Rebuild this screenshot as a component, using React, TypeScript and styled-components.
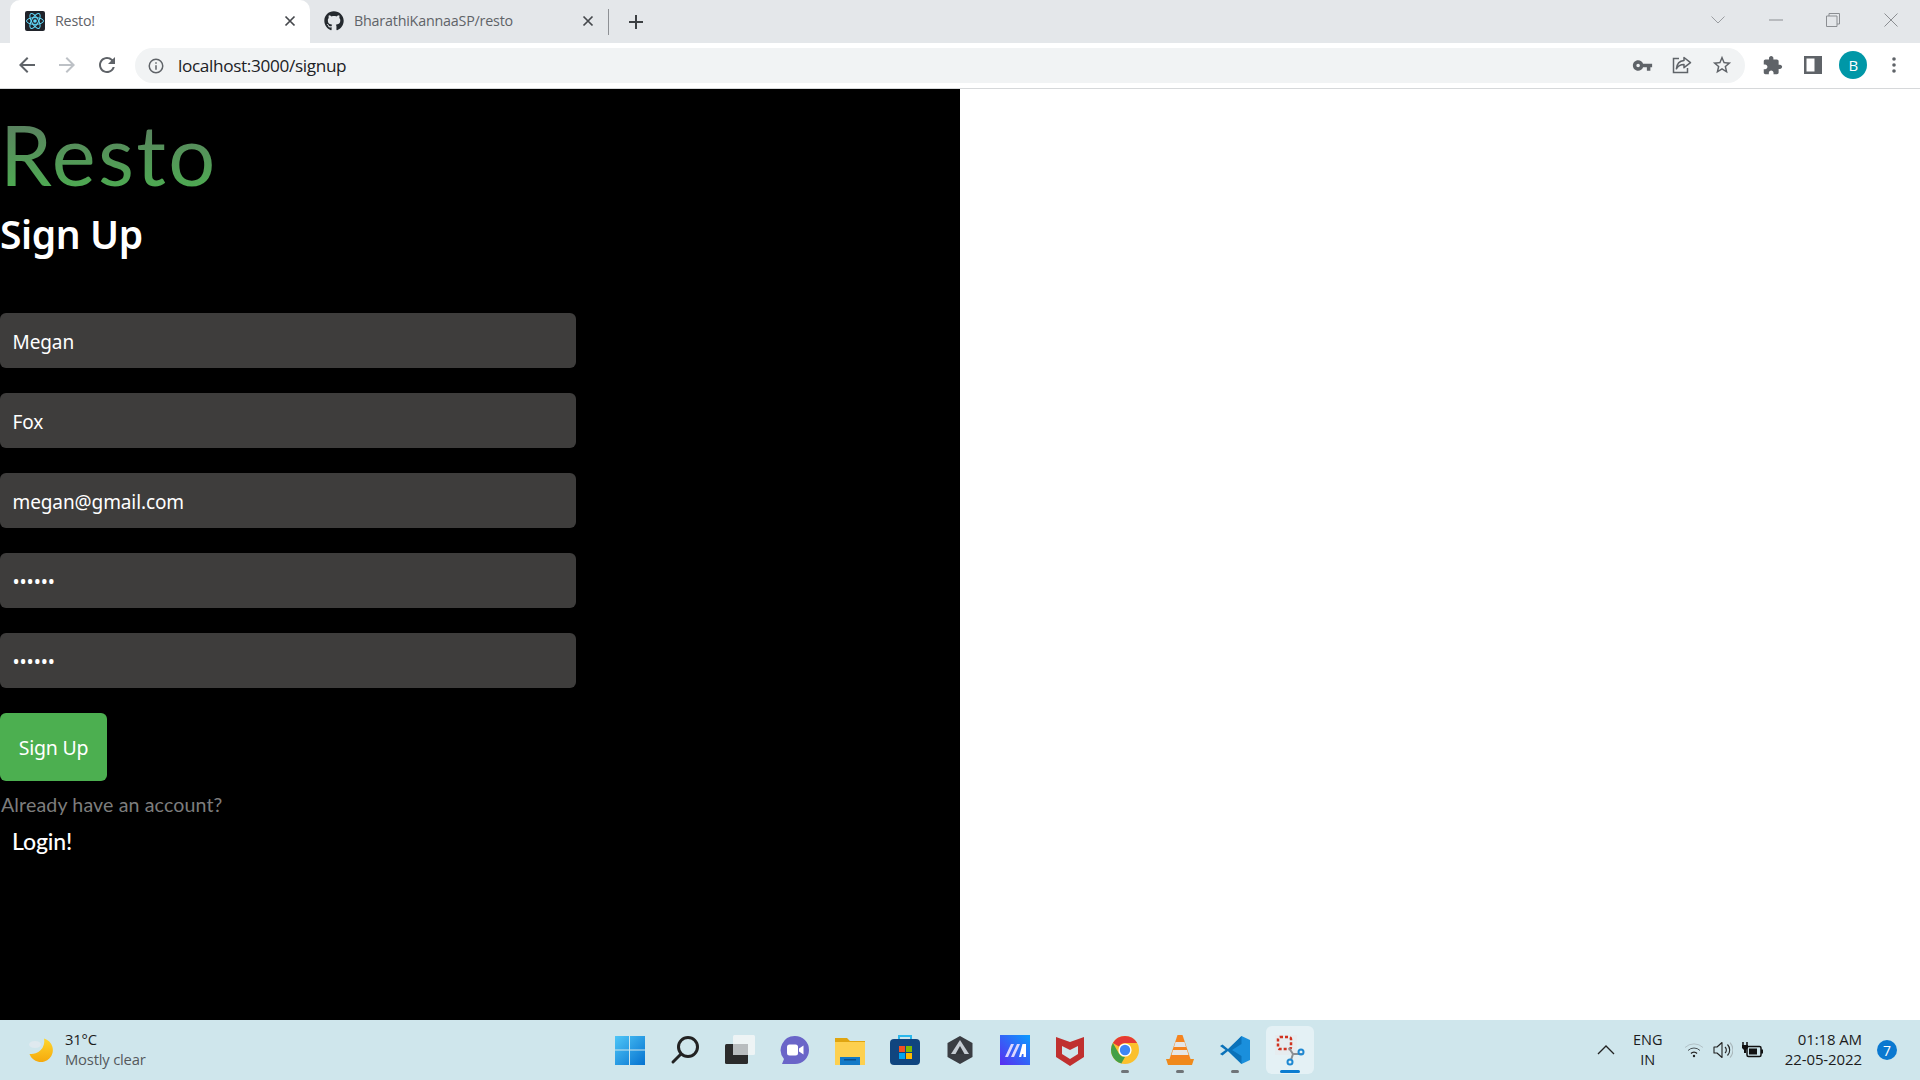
import React from "react";
import styled, { createGlobalStyle } from "styled-components";
import { FaGithub } from "react-icons/fa";

const Global = createGlobalStyle`
  html, body { margin: 0; padding: 0; background: #fff; }
  body { font-family: "Noto Sans", "Open Sans", sans-serif; overflow: hidden; }
  * { box-sizing: border-box; }
`;

const Screen = styled.div`
  width: 1920px; height: 1080px; display: flex; flex-direction: column; background: #fff;
`;

/* ---------- browser chrome ---------- */
const TabStrip = styled.div`
  height: 43px; flex: none; background: #e4e7ea; display: flex; align-items: flex-end; padding-left: 10px;
`;
const Tab = styled.div<{ $active?: boolean }>`
  width: ${(p) => (p.$active ? 300 : 298)}px; height: 43px; display: flex; align-items: center; gap: 10px;
  padding: 0 14px 2px ${(p) => (p.$active ? 15 : 14)}px; flex: none;
  background: ${(p) => (p.$active ? "#fff" : "transparent")};
  border-radius: 10px 10px 0 0;
  color: #5f6368; font-size: 14.3px; font-family: "Open Sans", sans-serif; letter-spacing: -0.2px;
`;
const TabTitle = styled.span`flex: 1; white-space: nowrap;`;
const TabDivider = styled.div`width: 1px; height: 26px; background: #8d9094; margin: 0 0 8px 0; flex: none;`;
const NewTab = styled.div`width: 53px; height: 43px; display: flex; align-items: center; justify-content: center; flex: none;`;
const WindowControls = styled.div`
  margin-left: auto; height: 43px; display: flex; align-items: center; padding-bottom: 3px;
`;
const WinBtn = styled.div<{ $w: number }>`
  width: ${(p) => p.$w}px; height: 36px; display: flex; align-items: center; justify-content: center;
`;

const Toolbar = styled.div`
  height: 46px; flex: none; background: #fff; border-bottom: 1px solid #d6d8da;
  display: flex; align-items: center; padding: 0 0 1px 7px;
`;
const NavBtn = styled.div`width: 40px; height: 40px; display: flex; align-items: center; justify-content: center; flex: none;`;
const UrlBar = styled.div`
  width: 1610px; height: 35px; margin-left: 8px; border-radius: 18px; background: #f1f3f4; flex: none;
  display: flex; align-items: center; padding: 0 0 0 34px; position: relative;
`;
const InfoSlot = styled.div`position: absolute; left: 12px; top: 9px; width: 18px; height: 18px;`;
const UrlText = styled.span`
  margin-left: 9px; font-family: "Open Sans", sans-serif; font-size: 17.2px; color: #202124; letter-spacing: -0.35px; white-space: nowrap;
`;
const UrlActions = styled.div`margin-left: auto; display: flex; align-items: center; padding-right: 3px;`;
const UrlAction = styled.div`width: 40px; height: 35px; display: flex; align-items: center; justify-content: center;`;
const ToolActions = styled.div`display: flex; align-items: center; padding-left: 7px;`;
const ToolAction = styled.div`width: 40.5px; height: 40px; display: flex; align-items: center; justify-content: center;`;
const Avatar = styled.div`
  width: 28px; height: 28px; border-radius: 50%; background: #0097a7; color: #fff;
  font-size: 15px; display: flex; align-items: center; justify-content: center; font-family: "Open Sans", sans-serif;
`;

/* ---------- page ---------- */
const Content = styled.div`flex: 1; display: flex; min-height: 0;`;
const Dark = styled.main`width: 960px; background: #000; display: flex; flex-direction: column; align-items: flex-start;`;
const Blank = styled.div`flex: 1; background: #fff;`;
const Brand = styled.h1`
  margin: 23px 0 0 0; height: 84px; font-family: "Lato", sans-serif; font-weight: 400; font-size: 83px; line-height: 84px;
  letter-spacing: 2.4px; background: linear-gradient(#5c7a62, #4caf50); -webkit-background-clip: text; background-clip: text; color: transparent;
`;
const Heading = styled.h2`
  margin: 12px 0 0 0; height: 56px; font-family: "Noto Sans", sans-serif; font-weight: 600; font-size: 39px; line-height: 52px; color: #fff; letter-spacing: -0.4px;
`;
const Form = styled.form`margin-top: 49px; display: flex; flex-direction: column; align-items: flex-start; gap: 25px;`;
const Field = styled.input`
  width: 576px; height: 55px; border: 0; outline: 0; border-radius: 6px; background: #3e3d3c; color: #fff;
  padding: 2px 12.5px 0; font-family: "Noto Sans", sans-serif; font-size: 19px; letter-spacing: -0.1px; display: block;
`;
const Submit = styled.button`
  width: 107px; height: 68px; border: 0; border-radius: 6px; background: #4caf50; color: #fff; padding: 0;
  font-family: "Noto Sans", sans-serif; font-size: 19.5px; letter-spacing: -0.2px;
`;
const Hint = styled.p`
  margin: 11px 0 0 1px; font-family: "Lato", sans-serif; font-size: 19.6px; line-height: 26px; color: #7d7d7d; letter-spacing: 0.13px;
`;
const LoginLink = styled.a`
  margin: 8px 0 0 12px; font-family: "Lato", sans-serif; font-size: 23px; line-height: 30px; color: #fff; font-weight: 500; letter-spacing: -0.1px;
`;

/* ---------- taskbar ---------- */
const Taskbar = styled.footer`
  height: 60px; flex: none; background: #cfe6ec; display: grid; grid-template-columns: 1fr auto 1fr; align-items: center;
`;
const Weather = styled.div`display: flex; align-items: center; padding-left: 27px; gap: 10px;`;
const WeatherText = styled.div`
  font-family: "Open Sans", sans-serif; font-size: 14.8px; line-height: 20px; color: #1c1c1c; letter-spacing: -0.2px; margin-top: -2px;
`;
const WeatherSub = styled.div`color: #55595c;`;
const Dock = styled.div`display: flex; align-items: center;`;
const DockSlot = styled.div<{ $active?: boolean }>`
  width: ${(p) => (p.$active ? 48 : 55)}px; margin: 0 ${(p) => (p.$active ? 3.5 : 0)}px; height: 48px;
  display: flex; align-items: center; justify-content: center; position: relative; border-radius: 6px;
  background: ${(p) => (p.$active ? "#e4f1f5" : "transparent")};
`;
const RunDot = styled.span<{ $active?: boolean }>`
  position: absolute; bottom: 1px; left: 50%; transform: translateX(-50%);
  height: 3px; border-radius: 2px; width: ${(p) => (p.$active ? 20 : 8)}px;
  background: ${(p) => (p.$active ? "#0a7cd1" : "#6f7478")};
`;
const Tray = styled.div`display: flex; align-items: center; justify-content: flex-end; padding-right: 23px;`;
const TrayIcon = styled.div<{ $w: number }>`width: ${(p) => p.$w}px; display: flex; align-items: center; justify-content: center;`;
const Lang = styled.div`
  width: 50px; margin: -1px 7px 0 7px; text-align: center; font-family: "Open Sans", sans-serif; font-size: 14.5px; line-height: 20px; color: #1c1c1c;
`;
const Clock = styled.div`
  margin: -2px 0 0 17px; text-align: right; font-family: "Open Sans", sans-serif; font-size: 15px; line-height: 20px; color: #1c1c1c; white-space: nowrap; letter-spacing: -0.1px;
`;
const Badge = styled.div`
  width: 20px; height: 20px; border-radius: 50%; background: #0a78d0; color: #fff; margin-left: 15px;
  font-family: "Open Sans", sans-serif; font-size: 14px; display: flex; align-items: center; justify-content: center;
`;

/* ---------- icons ---------- */
const Close = () => (
  <svg width="12" height="12" viewBox="0 0 12 12"><path d="M1.5 1.5l9 9M10.5 1.5l-9 9" stroke="#45484c" strokeWidth="1.7" /></svg>
);
const ReactIcon = () => (
  <svg width="20" height="20" viewBox="0 0 20 20">
    <rect width="20" height="20" rx="2" fill="#20232a" />
    <g fill="none" stroke="#61dafb" strokeWidth="1">
      <ellipse cx="10" cy="10" rx="8.5" ry="3.4" />
      <ellipse cx="10" cy="10" rx="8.5" ry="3.4" transform="rotate(60 10 10)" />
      <ellipse cx="10" cy="10" rx="8.5" ry="3.4" transform="rotate(120 10 10)" />
    </g>
    <circle cx="10" cy="10" r="1.8" fill="#61dafb" />
  </svg>
);
const Md = ({ d, size = 20, fill = "#5f6368" }: { d: string; size?: number; fill?: string }) => (
  <svg width={size} height={size} viewBox="0 0 24 24"><path d={d} fill={fill} /></svg>
);
const ChromeLogo = () => (
  <svg width="30" height="30" viewBox="0 0 30 30">
    <circle cx="15" cy="15" r="14" fill="#fbc02d" />
    <path d="M15 1a14 14 0 0 1 12.1 7H15a7 7 0 0 0-6.1 3.5L2.9 8A14 14 0 0 1 15 1z" fill="#e53935" />
    <path d="M2.9 8l6 10.5A7 7 0 0 0 15 22l-3.7 6.5 .4.1A14 14 0 0 1 2.9 8z" fill="#43a047" />
    <circle cx="15" cy="15" r="6.6" fill="#fff" />
    <circle cx="15" cy="15" r="5.2" fill="#3f86f4" />
  </svg>
);

export default function App() {
  return (
    <Screen>
      <Global />
      <TabStrip>
        <Tab $active>
          <ReactIcon />
          <TabTitle>Resto!</TabTitle>
          <Close />
        </Tab>
        <Tab>
          <FaGithub size={20} color="#24292e" />
          <TabTitle>BharathiKannaaSP/resto</TabTitle>
          <Close />
        </Tab>
        <TabDivider />
        <NewTab>
          <svg width="16" height="16" viewBox="0 0 16 16"><path d="M8 1v14M1 8h14" stroke="#3c4043" strokeWidth="2" /></svg>
        </NewTab>
        <WindowControls>
          <WinBtn $w={58}><svg width="14" height="8" viewBox="0 0 14 8"><path d="M.5.5L7 7l6.5-6.5" fill="none" stroke="#9a9da1" /></svg></WinBtn>
          <WinBtn $w={57}><svg width="14" height="2" viewBox="0 0 14 2"><path d="M0 1h14" stroke="#8b8e92" /></svg></WinBtn>
          <WinBtn $w={58}><svg width="14" height="14" viewBox="0 0 14 14"><path d="M.5 3h10.5v10.5H.5zM3 3V.5h10.5V11H11" fill="none" stroke="#8b8e92" /></svg></WinBtn>
          <WinBtn $w={58}><svg width="14" height="14" viewBox="0 0 14 14"><path d="M.5.5l13 13M13.5.5l-13 13" stroke="#8b8e92" /></svg></WinBtn>
        </WindowControls>
      </TabStrip>

      <Toolbar>
        <NavBtn><Md size={24} fill="#5f6368" d="M20 11H7.83l5.59-5.59L12 4l-8 8 8 8 1.41-1.41L7.83 13H20v-2z" /></NavBtn>
        <NavBtn><Md size={24} fill="#bdc1c6" d="M12 4l-1.41 1.41L16.17 11H4v2h12.17l-5.58 5.59L12 20l8-8z" /></NavBtn>
        <NavBtn><Md size={24} fill="#5f6368" d="M17.65 6.35A7.958 7.958 0 0 0 12 4c-4.42 0-7.99 3.58-7.99 8s3.57 8 7.99 8c3.73 0 6.84-2.55 7.73-6h-2.08A5.99 5.99 0 0 1 12 18c-3.31 0-6-2.69-6-6s2.69-6 6-6c1.66 0 3.14.69 4.22 1.78L13 11h7V4l-2.35 2.35z" /></NavBtn>
        <UrlBar>
          <InfoSlot><Md size={18} fill="#5f6368" d="M11 7h2v2h-2zm0 4h2v6h-2zm1-9a10 10 0 1 0 0 20 10 10 0 0 0 0-20zm0 18a8 8 0 1 1 0-16 8 8 0 0 1 0 16z" /></InfoSlot>
          <UrlText>localhost:3000/signup</UrlText>
          <UrlActions>
            <UrlAction><Md size={21} d="M12.65 10C11.83 7.67 9.61 6 7 6c-3.31 0-6 2.69-6 6s2.69 6 6 6c2.61 0 4.83-1.67 5.65-4H17v4h4v-4h2v-4H12.65zM7 14c-1.1 0-2-.9-2-2s.9-2 2-2 2 .9 2 2-.9 2-2 2z" /></UrlAction>
            <UrlAction>
              <svg width="20" height="20" viewBox="0 0 20 20" fill="none" stroke="#5f6368" strokeWidth="1.5">
                <path d="M7 3.5H1.5v14h14V13" />
                <path d="M12 2.5l6.5 5.2-6.5 5V9.6c-3.8 0-6 1.2-7.6 4.2.4-4.6 3-8 7.6-8.4z" strokeLinejoin="round" />
              </svg>
            </UrlAction>
            <UrlAction><Md size={22} d="M22 9.24l-7.19-.62L12 2 9.19 8.63 2 9.24l5.46 4.73L5.82 21 12 17.27 18.18 21l-1.63-7.03L22 9.24zM12 15.4l-3.76 2.27 1-4.28-3.32-2.88 4.38-.38L12 6.1l1.71 4.04 4.38.38-3.32 2.88 1 4.28L12 15.4z" /></UrlAction>
          </UrlActions>
        </UrlBar>
        <ToolActions>
          <ToolAction><Md size={21} d="M20.5 11H19V7c0-1.1-.9-2-2-2h-4V3.5C13 2.12 11.88 1 10.5 1S8 2.12 8 3.5V5H4c-1.1 0-1.99.9-1.99 2v3.8H3.5c1.49 0 2.7 1.21 2.7 2.7s-1.21 2.7-2.7 2.7H2V20c0 1.1.9 2 2 2h3.8v-1.5c0-1.49 1.21-2.7 2.7-2.7 1.49 0 2.7 1.21 2.7 2.7V22H17c1.1 0 2-.9 2-2v-4h1.5c1.38 0 2.5-1.12 2.5-2.5S21.88 11 20.5 11z" /></ToolAction>
          <ToolAction>
            <svg width="18" height="18" viewBox="0 0 18 18"><path fillRule="evenodd" d="M0 0h18v18H0zM2.5 2.500v13h8v-13z" fill="#5f6368" /></svg>
          </ToolAction>
          <ToolAction><Avatar>B</Avatar></ToolAction>
          <ToolAction>
            <svg width="4" height="16" viewBox="0 0 4 16" fill="#5f6368"><circle cx="2" cy="2" r="1.8" /><circle cx="2" cy="8" r="1.8" /><circle cx="2" cy="14" r="1.8" /></svg>
          </ToolAction>
        </ToolActions>
      </Toolbar>

      <Content>
        <Dark>
          <Brand>Resto</Brand>
          <Heading>Sign Up</Heading>
          <Form onSubmit={(e) => e.preventDefault()}>
            <Field readOnly value="Megan" />
            <Field readOnly value="Fox" />
            <Field readOnly value="megan@gmail.com" />
            <Field readOnly type="password" value="123456" />
            <Field readOnly type="password" value="123456" />
            <Submit>Sign Up</Submit>
          </Form>
          <Hint>Already have an account?</Hint>
          <LoginLink>Login!</LoginLink>
        </Dark>
        <Blank />
      </Content>

      <Taskbar>
        <Weather>
          <svg width="28" height="28" viewBox="0 0 28 28">
            <defs><linearGradient id="moon" x1="0" y1="0" x2="0" y2="1"><stop offset="0" stopColor="#ffd62e" /><stop offset="1" stopColor="#f5a90c" /></linearGradient></defs>
            <path d="M17 2.500A12 12 0 1 1 2.500 18 13 13 0 0 0 17 2.500z" fill="url(#moon)" />
            <ellipse cx="8" cy="8.500" rx="6" ry="3.500" fill="#dfe9ef" />
          </svg>
          <WeatherText>
            31°C
            <WeatherSub>Mostly clear</WeatherSub>
          </WeatherText>
        </Weather>
        <Dock>
          <DockSlot>
            <svg width="30" height="30" viewBox="0 0 30 30">
              <defs><linearGradient id="w" x1="0" y1="0" x2="1" y2="1"><stop offset="0" stopColor="#4fc6f7" /><stop offset="1" stopColor="#0572d0" /></linearGradient></defs>
              <path fillRule="evenodd" d="M0 1h14v13.500H0zM15 1h15v13.500H15zM0 15.500h14V30H0zM15 15.500h15V30H15z" fill="url(#w)" />
            </svg>
          </DockSlot>
          <DockSlot>
            <svg width="30" height="30" viewBox="0 0 30 30" fill="none" stroke="#222" strokeWidth="3"><circle cx="18" cy="12" r="9.500" /><path d="M11 19l-8 8" strokeLinecap="round" /></svg>
          </DockSlot>
          <DockSlot>
            <svg width="30" height="30" viewBox="0 0 30 30">
              <rect x="0" y="9" width="23" height="20" rx="1.500" fill="#2b2b2b" />
              <rect x="8" y="0" width="22" height="20" rx="1.500" fill="#f3f6f7" opacity=".85" />
              <rect x="8" y="9" width="15" height="11" fill="#b9bdbf" />
            </svg>
          </DockSlot>
          <DockSlot>
            <svg width="30" height="30" viewBox="0 0 30 30">
              <path d="M15 1a14 14 0 0 1 0 28H2l2-5A14 14 0 0 1 15 1z" fill="#6a65c8" />
              <rect x="7" y="9.500" width="11" height="11" rx="2.500" fill="#fff" />
              <path d="M19 13.500l4.500-3v9l-4.500-3z" fill="#fff" />
            </svg>
          </DockSlot>
          <DockSlot>
            <svg width="30" height="30" viewBox="0 0 30 30">
              <path d="M0 3h12l3 3h15v24H0z" fill="#e0a510" />
              <rect x="0" y="7" width="30" height="23" fill="#fdd04f" />
              <path d="M5 22h20v8H5z" fill="#1279c7" />
              <rect x="9" y="24" width="12" height="1.500" fill="#0b4f8a" />
            </svg>
          </DockSlot>
          <DockSlot>
            <svg width="30" height="32" viewBox="0 0 30 32">
              <path d="M9 6V2h12v4" fill="none" stroke="#2bb8ec" strokeWidth="2" />
              <rect x="0" y="5" width="30" height="26" rx="4" fill="#10457f" />
              <rect x="9" y="12" width="6" height="6" fill="#f25022" />
              <rect x="16" y="12" width="6" height="6" fill="#7fba00" />
              <rect x="9" y="19" width="6" height="6" fill="#00a4ef" />
              <rect x="16" y="19" width="6" height="6" fill="#ffb900" />
            </svg>
          </DockSlot>
          <DockSlot>
            <svg width="30" height="30" viewBox="0 0 30 30">
              <path d="M15 1l12.500 7v14L15 29 2.500 22V8z" fill="#3a3d42" />
              <path d="M15 5l9 14H6z" fill="#c6ccd2" />
              <path d="M15 11l4.500 8h-9z" fill="#33363a" />
            </svg>
          </DockSlot>
          <DockSlot>
            <svg width="30" height="30" viewBox="0 0 30 30">
              <defs><linearGradient id="m" x1="0" y1="1" x2="1" y2="0"><stop offset="0" stopColor="#5a2cf0" /><stop offset="1" stopColor="#0a9cff" /></linearGradient></defs>
              <rect width="30" height="30" fill="url(#m)" />
              <path d="M5 22l6-13h3l-6 13zM11 22l6-13h3l-6 13z" fill="#dcd6ff" />
              <path d="M19 22l3.500-13H26v13h-2.500v-3H22l-.8 3z" fill="#fff" />
            </svg>
          </DockSlot>
          <DockSlot>
            <svg width="28" height="32" viewBox="0 0 28 32">
              <path fillRule="evenodd" d="M0 3l14 5 14-5v20l-14 9-14-9zM6 12v8l8 5 8-5v-8l-8 4z" fill="#c0302f" />
            </svg>
          </DockSlot>
          <DockSlot><ChromeLogo /><RunDot /></DockSlot>
          <DockSlot>
            <svg width="28" height="32" viewBox="0 0 28 32">
              <path d="M11.500 1h5l8 24H3.500z" fill="#f5841f" />
              <path d="M9.500 8h9l1.500 5H8zM7 16h14l1.500 5h-17z" fill="#e6e6e6" />
              <path d="M0 25h28l-2 6H2z" fill="#ef8a1c" />
            </svg>
            <RunDot />
          </DockSlot>
          <DockSlot>
            <svg width="30" height="30" viewBox="0 0 30 30">
              <path d="M21.500 1L30 5v20l-8.500 4L8 16z" fill="#1a8fdc" />
              <path d="M21.500 1L8 14 2.500 9.500 0 11l5.500 4L0 19l2.500 1.500L8 16l13.500 13V21L12 15l9.500-6z" fill="#0b72b9" />
            </svg>
            <RunDot />
          </DockSlot>
          <DockSlot $active>
            <svg width="30" height="32" viewBox="0 0 30 32" fill="none">
              <rect x="0" y="1" width="22" height="20" fill="#e6ecef" />
              <rect x="3" y="3" width="13" height="12" rx="2" stroke="#d0321f" strokeWidth="2.500" strokeDasharray="3 2" />
              <path d="M14 14l4 6h9M18 20l-2 6" stroke="#8a8f94" strokeWidth="2" />
              <circle cx="26" cy="18" r="2.500" stroke="#1e88d2" strokeWidth="2" />
              <circle cx="15" cy="28" r="2.500" stroke="#1e88d2" strokeWidth="2" />
            </svg>
            <RunDot $active />
          </DockSlot>
        </Dock>
        <Tray>
          <TrayIcon $w={20}><svg width="18" height="10" viewBox="0 0 18 10"><path d="M1 9l8-8 8 8" fill="none" stroke="#222" strokeWidth="1.300" /></svg></TrayIcon>
          <Lang>ENG<br />IN</Lang>
          <TrayIcon $w={28}>
            <svg width="20" height="16" viewBox="0 0 20 16" fill="none" stroke="#222">
              <path d="M1 5.500a13 13 0 0 1 18 0" stroke="#b3c2c7" />
              <path d="M4 8.500a8.500 8.500 0 0 1 12 0" stroke="#4a5256" />
              <path d="M7 11.500a4 4 0 0 1 6 0" strokeWidth="1.300" />
              <circle cx="10" cy="14" r="1.200" fill="#222" stroke="none" />
            </svg>
          </TrayIcon>
          <TrayIcon $w={30}>
            <svg width="20" height="18" viewBox="0 0 20 18" fill="none" stroke="#222" strokeWidth="1.100">
              <path d="M1 6h3l5-4.500v15L4 12H1z" strokeLinejoin="round" />
              <path d="M12 6a4 4 0 0 1 0 6M14.500 3.500a8 8 0 0 1 0 11" />
              <path d="M17 1.500a11 11 0 0 1 0 15" stroke="#aab8bc" />
            </svg>
          </TrayIcon>
          <TrayIcon $w={30}>
            <svg width="21" height="16" viewBox="0 0 21 16">
              <path d="M1 0v3M5 0v3" stroke="#111" strokeWidth="1.500" />
              <path d="M0 3h6v3l-2 2v3H2V8L0 6z" fill="#111" />
              <rect x="5" y="4.500" width="14" height="10" rx="1.500" fill="none" stroke="#111" strokeWidth="1.500" />
              <rect x="7" y="6.500" width="8" height="6" fill="#111" />
              <rect x="19" y="7.500" width="2" height="4" fill="#111" />
            </svg>
          </TrayIcon>
          <Clock>01:18 AM<br />22-05-2022</Clock>
          <Badge>7</Badge>
        </Tray>
      </Taskbar>
    </Screen>
  );
}
